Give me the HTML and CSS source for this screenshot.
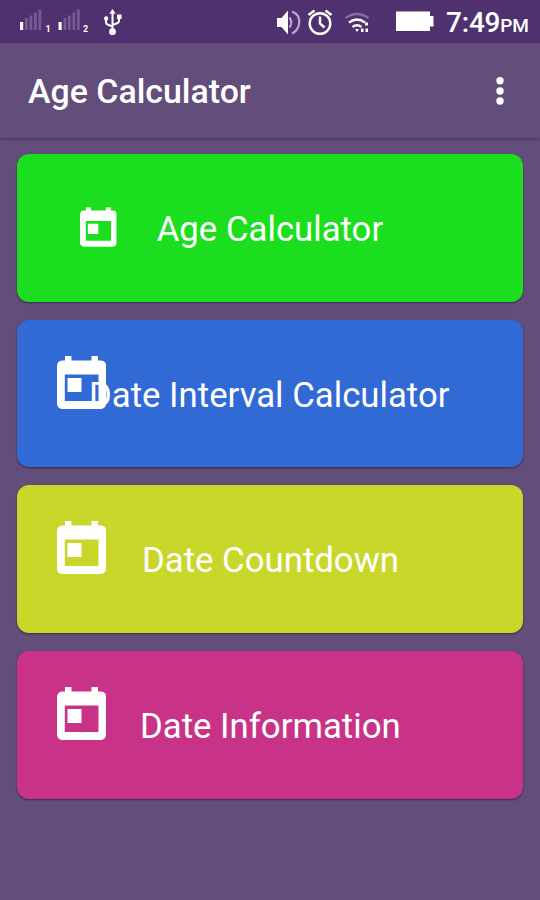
FILE: index.html
```
<!DOCTYPE html>
<html lang="en">
<head>
<meta charset="utf-8">
<title>Age Calculator</title>
<link rel="stylesheet" href="styles.css">
</head>
<body>
<svg class="defs" aria-hidden="true">
  <symbol id="cal" viewBox="0 0 49 53">
    <path fill="#fff" fill-rule="evenodd" d="M8 0h6.500v4.500h20V0H41v4.500h3q5 .500 5 5V48q-.500 4.500-5 5H5q-4.500-.500-5-5V9.500q.500-4.500 5-5h3zM7.800 18.500V45h33.700V18.500zM10.500 22h14v14h-14z"/>
  </symbol>
</svg>
<header class="status">
  <svg class="signals" viewBox="0 0 140 43" width="140" height="43">
    <g fill="#755b93"><path d="M25 18h2.800v12H25zM29.500 15.500h2.800V30h-2.800zM34 12.500h2.800V30H34zM38.500 9.500h2.800V30h-2.800zM63.500 18h2.800v12h-2.800zM68 15.500h2.800V30H68zM72.500 12.500h2.800V30h-2.800zM77 9.500h2.800V30H77z"/></g>
    <path fill="#fff" d="M20 22h3.200v8H20zM58.500 22h3.200v8h-3.200z"/>
    <text x="45.500" y="32" class="sim">1</text><text x="83" y="32" class="sim">2</text>
    <g fill="none" stroke="#fff" stroke-width="2"><path d="M112.500 13v18M106 19v3.500q0 1.500 2 2.200l4.500 1.800M119 17v4q0 1.500-2 2.200l-4.500 1.800"/></g>
    <g fill="#fff"><circle cx="112.500" cy="31.700" r="3.400"/><path d="M112.500 9l3.200 4.800h-6.400z"/><circle cx="106.200" cy="18.500" r="2.200"/><path d="M117 14.500h4.500V19H117z"/></g>
  </svg>
  <svg class="indicators" viewBox="270 0 170 43" width="170" height="43">
    <path fill="#fff" d="M277 18h4.500l6.500-7.500v24L281.500 27H277z"/>
    <g fill="none" stroke="#b7a8c7" stroke-width="2.200"><path d="M289.500 17.500q3.500 5 0 10M292 11.500q9 3.500 7 13-1.500 6.500-7 9"/></g>
    <g fill="none" stroke="#fff" stroke-width="2.400"><circle cx="320" cy="23.500" r="10.300"/><path d="M320 16.500v7l4.500 4M308.500 15l6-4.500M325.500 10.500l6 4.500"/></g>
    <path fill="none" stroke="#8771a2" stroke-width="2.400" d="M345.500 18q11.500-8 23 0"/>
    <g fill="none" stroke="#fff" stroke-width="2.500"><path d="M349 22.500q8-6 16 0M352.500 27q4.500-3.500 9 0"/></g>
    <path fill="#fff" d="M355 29h4l-2 3zM365 22.500h3v3h-3zM361 28.500h2.500V32H361zM365.500 28.500h2.500V32h-2.500zM396 11.500h34V16h3.500v10.500H430V31h-34z"/>
  </svg>
  <div class="time">7:49<span>PM</span></div>
</header>
<nav class="bar">
  <h1>Age Calculator</h1>
  <svg class="more" viewBox="0 0 8 30"><g fill="#fff"><circle cx="4" cy="4.700" r="3.700"/><circle cx="4" cy="15" r="3.700"/><circle cx="4" cy="25" r="3.700"/></g></svg>
</nav>
<main class="list">
  <a class="card age"><svg class="icon"><use href="#cal"/></svg><span class="label">Age Calculator</span></a>
  <a class="card interval"><svg class="icon"><use href="#cal"/></svg><span class="label">Date Interval Calculator</span></a>
  <a class="card countdown"><svg class="icon"><use href="#cal"/></svg><span class="label">Date Countdown</span></a>
  <a class="card info"><svg class="icon"><use href="#cal"/></svg><span class="label">Date Information</span></a>
</main>
</body>
</html>
```
FILE: styles.css
```
* { box-sizing: border-box; }
body {
  margin: 0;
  height: 900px;
  overflow: hidden;
  background: #634d7b;
  color: #fff;
  font-family: Roboto, "Liberation Sans", sans-serif;
}
.defs { display: none; }
.status {
  display: flex;
  height: 43px;
  background: #4f316f;
}
.indicators { margin-left: 130px; }
.sim { fill: #fff; font-size: 9px; font-weight: 700; }
.time {
  margin-left: 6px;
  font-size: 28px;
  font-weight: 500;
  line-height: 46px;
  letter-spacing: -0.2px;
  white-space: nowrap;
}
.time span { font-size: 19px; }
.bar {
  display: flex;
  align-items: center;
  justify-content: space-between;
  height: 95px;
  padding: 0 36.500px 0 28px;
  box-shadow: 0 1px 3px rgba(45, 25, 65, .55);
}
h1 {
  margin: 2px 0 0;
  font-size: 33.900px;
  font-weight: 500;
  line-height: 40px;
  white-space: nowrap;
}
.more { width: 8px; height: 30px; }
.list {
  display: flex;
  flex-direction: column;
  gap: 18px;
  padding: 16px 17px;
}
.card {
  display: flex;
  align-items: flex-start;
  height: 147.700px;
  padding: 35.500px 0 0 40px;
  border-radius: 12px;
  box-shadow: 0 1px 2px rgba(35, 20, 55, .65);
}
.icon { flex: none; width: 49px; height: 53px; }
.label {
  margin: 18px 0 0 36px;
  font-size: 34.750px;
  line-height: 42px;
  white-space: nowrap;
}
.age { padding: 52.500px 0 0 63px; background: #1bdf1e; }
.age .icon { width: 36.700px; height: 40px; }
.age .label { margin: 1.500px 0 0 40px; }
.interval { padding-top: 36px; background: #3169d5; }
.interval .label { margin-left: -17px; }
.countdown { background: #c9d72b; }
.info { background: #c93387; }
.info .label { margin-left: 34px; }
```
